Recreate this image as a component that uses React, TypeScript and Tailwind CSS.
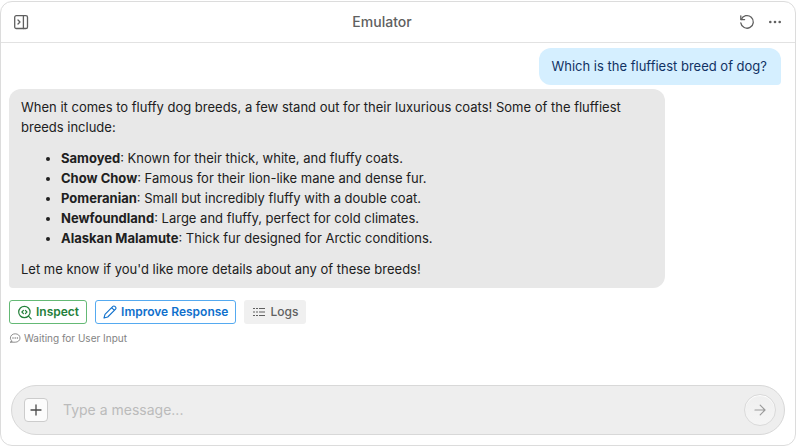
import React from "react";

const breeds = [
  { name: "Samoyed", text: "Known for their thick, white, and fluffy coats." },
  { name: "Chow Chow", text: "Famous for their lion-like mane and dense fur." },
  { name: "Pomeranian", text: "Small but incredibly fluffy with a double coat." },
  { name: "Newfoundland", text: "Large and fluffy, perfect for cold climates." },
  { name: "Alaskan Malamute", text: "Thick fur designed for Arctic conditions." },
];

function Icon({ size, width = 1, children }: { size: number; width?: number; children: React.ReactNode }) {
  return (
    <svg
      width={size}
      height={size}
      viewBox={`0 0 ${size} ${size}`}
      fill="none"
      stroke="currentColor"
      strokeWidth={width}
      strokeLinecap="round"
      strokeLinejoin="round"
      className="shrink-0"
      aria-hidden="true"
    >
      {children}
    </svg>
  );
}

function Header() {
  return (
    <header className="flex h-[41px] items-center justify-between border-b border-[#e2e2e2] px-3 text-[#606060]">
      <button type="button" aria-label="Toggle panel">
        <Icon size={16} width={1.3}>
          <rect x="1.7" y="1.7" width="12.8" height="12.8" rx="1.6" />
          <path d="M10.4 1.7v12.8M5 6l2 2-2 2" />
        </Icon>
      </button>
      <h1 className="text-sm font-medium">Emulator</h1>
      <div className="flex items-center gap-3 pl-1">
        <button type="button" aria-label="Restart">
          <Icon size={16} width={1.3}>
            <path d="M1.8 1.8v3.8h3.8" />
            <path d="M2.2 5.5A6.3 6.3 0 1 1 1.8 8.8" />
          </Icon>
        </button>
        <button type="button" aria-label="More options">
          <svg width="16" height="16" viewBox="0 0 16 16" fill="currentColor" aria-hidden="true">
            <circle cx="3.3" cy="8" r="1.3" />
            <circle cx="8" cy="8" r="1.3" />
            <circle cx="12.7" cy="8" r="1.3" />
          </svg>
        </button>
      </div>
    </header>
  );
}

function Actions() {
  return (
    <div className="mt-3 flex gap-2 text-xs font-semibold">
      <button type="button" className="flex h-6 items-center gap-1 rounded-[3px] border border-[#64b975] px-[7px] text-[#24803a]">
        <Icon size={15} width={1.2}>
          <circle cx="7.4" cy="7" r="5.7" />
          <path d="m11.5 11.2 2.7 2.7M6.4 5.4 4.9 7l1.5 1.6M8.4 5.4 9.9 7 8.4 8.6" />
        </Icon>
        Inspect
      </button>
      <button type="button" className="flex h-6 items-center gap-1 rounded-[3px] border border-[#55aaf0] px-[7px] text-[#0f70cc]">
        <Icon size={14} width={1.1}>
          <path d="m1 13 1-3.7 7.9-7.9a1.4 1.4 0 0 1 2 0l.7.7a1.4 1.4 0 0 1 0 2L4.7 12 1 13ZM8.7 2.7l2.6 2.6" />
        </Icon>
        Improve Response
      </button>
      <button type="button" className="flex h-6 items-center gap-1 rounded-[3px] bg-[#f0f0f0] px-2 font-medium text-[#606060]">
        <Icon size={14}>
          <path strokeLinecap="butt" d="M1 3.5h2M4 3.5h2M7 3.5h6M1 10.5h2M4 10.5h2M7 10.5h6" />
          <path strokeLinecap="butt" strokeWidth="2" strokeOpacity="0.5" d="M1 7h2M4 7h2M7 7h6" />
        </Icon>
        Logs
      </button>
    </div>
  );
}

function Composer() {
  return (
    <form
      className="mx-[10px] mb-[10px] flex h-[50px] items-center rounded-full border border-[#d8d8d8] bg-[#eeeeee] pr-2 pl-3"
      onSubmit={(e) => e.preventDefault()}
    >
      <button
        type="button"
        aria-label="Add attachment"
        className="flex size-6 shrink-0 items-center justify-center rounded-[4px] border border-[#cccccc] bg-[#fcfcfc] text-[#4a4a4a]"
      >
        <Icon size={12} width={1.3}>
          <path d="M6 1v10M1 6h10" />
        </Icon>
      </button>
      <input
        type="text"
        aria-label="Message"
        placeholder="Type a message..."
        className="ml-[15px] min-w-0 flex-1 bg-transparent text-sm text-[#202020] outline-none placeholder:text-[#bbbbbb]"
      />
      <button
        type="submit"
        aria-label="Send"
        className="flex size-8 shrink-0 items-center justify-center rounded-full border border-[#dadada] bg-linear-to-b from-[#efefef] to-[#f5f5f5] text-[#9a9a9a] shadow-[inset_0_1px_1px_#ffffff]"
      >
        <Icon size={14} width={1.2}>
          <path d="M2 7h10M7.2 2.2 12 7l-4.8 4.8" />
        </Icon>
      </button>
    </form>
  );
}

export default function App() {
  return (
    <div className="flex h-screen flex-col bg-white pt-px font-['Inter',sans-serif]">
      <div className="flex min-h-0 flex-1 flex-col rounded-xl border border-[#dcdcdc] bg-white">
        <Header />
        <main className="flex min-h-0 flex-1 flex-col pt-[5px] pr-[14px] pl-2 text-[13px] leading-5">
          <p className="self-end rounded-xl rounded-br-[4px] bg-[#d5efff] pt-2 pr-[14px] pb-[9px] pl-3 text-[#113264]">
            Which is the fluffiest breed of dog?
          </p>
          <article className="mt-1 flex w-[85%] flex-col gap-[11px] rounded-xl rounded-bl-[4px] bg-[#e8e8e8] px-3 pt-2 pb-[9px] text-[#202020]">
            <p>
              When it comes to fluffy dog breeds, a few stand out for their luxurious coats! Some of the fluffiest
              breeds include:
            </p>
            <ul className="list-disc pl-10">
              {breeds.map((b) => (
                <li key={b.name}>
                  <strong className="font-bold">{b.name}</strong>: {b.text}
                </li>
              ))}
            </ul>
            <p>Let me know if you'd like more details about any of these breeds!</p>
          </article>
          <Actions />
          <p className="mt-1 flex items-center gap-[3px] text-[10px] leading-5 text-[#838383]">
            <Icon size={12} width={0.9}>
              <path d="M1.5 10.2h4.7C9 10.2 11 8.4 11 6S9 1.8 6.2 1.8 1.4 3.6 1.4 6c0 1.200.6 2.200 1.500 3Z" />
              <path d="M3.900 6h.2M6.100 6h.2M8.300 6h.2" strokeWidth="1.300" />
            </Icon>
            Waiting for User Input
          </p>
        </main>
        <Composer />
      </div>
    </div>
  );
}
